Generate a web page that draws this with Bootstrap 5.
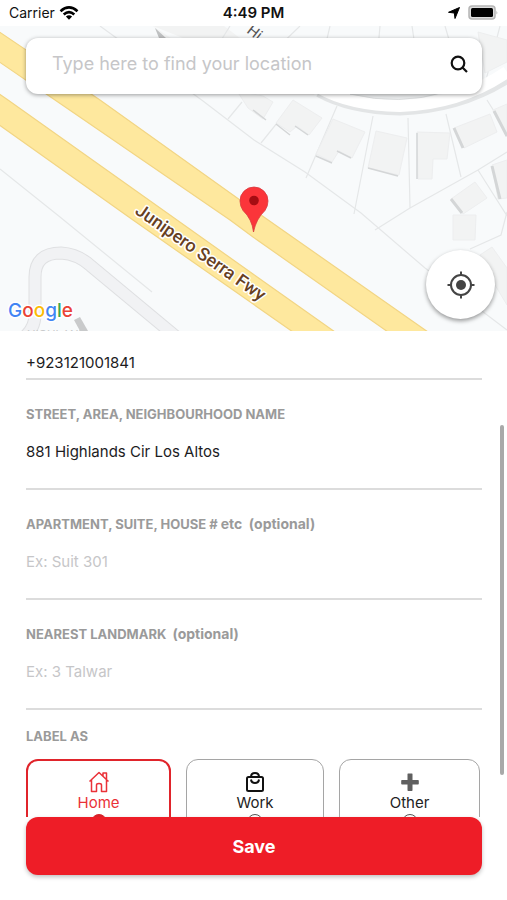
<!DOCTYPE html>
<html lang="en">
<head>
<meta charset="utf-8">
<meta name="viewport" content="width=device-width, initial-scale=1">
<title>Delivery address</title>
<link href="https://cdn.jsdelivr.net/npm/bootstrap@5.3.0/dist/css/bootstrap.min.css" rel="stylesheet">
<style>
  body { font-family: Inter, "Liberation Sans", sans-serif; font-size: 15px; color: #1c1c1e; background: #fff; }
  .status-bar { height: 26px; line-height: 26px; font-size: 14px; color: #111; padding: 0 9px; }
  .status-bar .clock { font-size: 15px; font-weight: 600; }
  .map-area { height: 305px; background: #f8fafb; }
  .map-art { inset: 0; }
  .search-box { margin: 12px 25px 0 26px; height: 56px; border-radius: 12px; background: #fff; box-shadow: 0 1px 4px rgba(0,0,0,.38); padding: 0 11px 4px 26px; }
  .search-box input { font-size: 18px; line-height: 24px; color: #333; outline: 0; }
  .search-box input::placeholder, .entry input::placeholder { color: #c6c6c8; opacity: 1; }
  .locate { right: 12px; bottom: 12px; width: 69px; height: 69px; box-shadow: 0 2px 4px rgba(0,0,0,.4); }
  .form-scroll { min-height: 0; padding: 0 25px 0 26px; }
  .entry { border-bottom: 2px solid #dcdcdc; }
  .entry input { height: 54px; font-size: 15px; color: #1c1c1e; outline: 0; margin-bottom: 10px; }
  .entry .phone { height: 30px; margin: 18px 0 0; line-height: 30px; }
  .entry label, .caption { font-size: 13px; line-height: 20px; font-weight: 700; color: #9a9a9a; white-space: pre; }
  .entry label span { font-size: 14px; }
  .entry label { height: 20px; margin-top: 24px; }
  .entry:first-child { margin-top: -1px; }
  .caption { margin: 16px 0 13px; }
  .choices { display: grid; grid-template-columns: 145fr 138fr 141fr; gap: 15px; padding-right: 2px; }
  .choice { height: 86px; border: 1px solid #a5a5a5; border-radius: 12px; padding-top: 11px; line-height: 20px; color: #222; }
  .choice.picked { border: 2px solid #e0242b; padding-top: 10px; color: #ea3138; }
  .choice input { appearance: none; width: 16px; height: 16px; border: 1px solid #555; border-radius: 50%; margin: 1px 0 0; }
  .choice input:checked { background: #d9222a; border-color: #d9222a; }
  .scroll-thumb { right: 3px; top: 94px; width: 4px; height: 350px; border-radius: 2px; background: #a9a9a9; }
  .save-wrap { padding: 0 25px 25px 26px; }
  .save-btn, .save-btn:hover { height: 58px; border: 0; border-radius: 12px; background: #ee1d27; color: #fff; font-size: 18px; font-weight: 700; box-shadow: 0 2px 4px rgba(0,0,0,.25); }
</style>
<script src="https://cdn.jsdelivr.net/npm/bootstrap@5.3.0/dist/js/bootstrap.bundle.min.js"></script>
</head>
<body>
<div class="d-flex flex-column vh-100 overflow-hidden">
  <header class="status-bar row g-0 align-items-center flex-shrink-0">
    <div class="col d-flex align-items-center gap-1">
      <span>Carrier</span>
      <svg width="20" height="14" viewBox="0 0 20 14" fill="none" stroke="#000" stroke-width="2.6" aria-label="Wi-Fi"><path d="M1.5 5.2Q10-2.4 18.500 5.200M4.700 8.500Q10 3.800 15.300 8.500"/><path d="M10 13.800 6.900 10.600Q10 8.100 13.100 10.600Z" fill="#000" stroke="none"/></svg>
    </div>
    <div class="col-auto clock">4:49 PM</div>
    <div class="col d-flex align-items-center justify-content-end gap-2">
      <svg width="12" height="12" viewBox="0 0 12 12" aria-label="Location in use"><path d="M11.500.5 7 11.500 6.300 6 .5 5.300Z" fill="#000" stroke="#000" stroke-linejoin="round"/></svg>
      <svg width="30" height="16" viewBox="0 0 30 16" aria-label="Battery full"><rect x="1" y="1" width="26" height="13" rx="3" fill="#ddd" stroke="#b5b5b5" stroke-width="1.500"/><rect x="3" y="3" width="22" height="9" rx="1.500" fill="#000"/><path d="M28.500 5.500q1.500 2 0 4z" fill="#aaa"/></svg>
    </div>
  </header>

  <section class="map-area position-relative overflow-hidden flex-shrink-0">
    <svg class="map-art position-absolute w-100 h-100" viewBox="0 26 507 305" preserveAspectRatio="xMidYMid slice" aria-label="Map">
      <rect y="26" width="507" height="305" fill="#f8fafb"/>
      <path d="M153 26 224 26 315 95 260 95 245 88 M153 26 190 60H238Z" fill="#f2f3f3"/>
      <g fill="none" stroke="#e5e7e8" stroke-width="1.200">
        <path d="M100 26 203 101 254 140 305 172 361 213 425 268 507 330M0 169 60 217 152 292"/>
        <path d="M242 102 228 119M294 102 261 143M337 106 306 178M373 116 354 214M408 118 410 208M446 114 461 177M375 230 410 208 478 170 507 152M478 170 507 216M487 100 507 132M470 249 501 235 507 212M215 50 230 26M270 55 300 26M330 26 322 60M380 26 377 60M412 26 417 60M445 26 455 60M500 26 486 80"/>
      </g>
      <path d="M320 90Q350 107 400 108Q460 106 507 76" fill="none" stroke="#e3e5e6" stroke-width="15"/>
      <path d="M320 88Q350 105 400 106Q460 104 507 72" fill="none" stroke="#fff" stroke-width="12"/>
      <path d="M350 94Q400 106 445 92Z" fill="#eceeef" stroke="#dcdedf"/>
      <g fill="#f2f3f3" stroke="#edeeef">
        <path d="M237 91 263 96 273 102 263 119 248 108ZM293 100 322 118 309 135 297 126 290 132 276 123ZM333 119 365 132 352 158 339 151 332 162 316 154ZM376 131 407 138 399 175 368 168ZM417 132 450 133 447 159 433 159 432 179 418 179ZM454 128 490 114 497 132 464 148ZM493 110 507 104V137ZM492 165 507 160V198L498 199ZM451 199 475 182 487 198 463 214ZM453 215 476 215 475 240 453 240Z"/>
        <path d="M480 255 492 247 507 268V305L492 280ZM478 32 507 40V62L485 73Z"/>
      </g>
      <g fill="none" stroke="#d4d6d7" stroke-width="1.500">
        <path d="M253 110 266 120M276 124 290 135M295 126 308 135M316 156 332 163M337 151 351 158M368 168 398 176M417 133V179"/>
        <path d="M454 128 463 148M494 111 507 136M492 166 500 199M451 199 462 213" stroke-width="3"/>
      </g>
      <path d="M155 28 166 38H159Z" fill="#bfc1c2"/>
      <path d="M20 340Q35 331 35 314V277Q35 253 61 253Q78 254 91 266L180 340" fill="none" stroke="#dfe0e2" stroke-width="13"/>
      <path d="M20 340Q35 331 35 314V277Q35 253 61 253Q78 254 91 266L180 340" fill="none" stroke="#f1f2f4" stroke-width="11"/>
      <path d="M74 320 80 317 88 331H80Z" fill="#c9cacb"/>
      <g fill="#fee89e" stroke="#f2d584" stroke-width="1.200">
        <path d="M-2 31 100 100 240 200 261 215 428 332H388L253 237 230 220 55 100-2 61Z"/>
        <path d="M-2 93 8 100 177 220 253 274 335 332H293L133 220-2 124Z"/>
      </g>
      <text x="246" y="32" transform="rotate(38 246 32)" font-family="Roboto, sans-serif" font-size="15" fill="#555">Hi</text>
      <text x="27" y="339" font-family="Roboto, sans-serif" font-size="12" fill="#c8cacb">HIGHLAND</text>
      <text x="134" y="213" transform="rotate(35 134 213)" font-family="Roboto, sans-serif" font-size="18" font-weight="500" fill="#67401f" stroke="#fff" stroke-width="3" stroke-linejoin="round" paint-order="stroke">Junipero Serra Fwy</text>
      <path d="M253.500 232Q252 219 243 210.500Q240 206 240 201A14 14 0 0 1 268 201Q268 206 265 210.500Q256 219 253.500 232Z" fill="#fb353a" stroke="#d8393d" stroke-width=".8"/>
      <circle cx="254" cy="200.500" r="4.800" fill="#a50d12"/>
      <text x="8" y="317" font-family="Inter, sans-serif" font-size="19" font-weight="500" stroke="#fff" stroke-width="3" paint-order="stroke"><tspan fill="#4285f4">G</tspan><tspan fill="#ea4335">o</tspan><tspan fill="#fbbc05">o</tspan><tspan fill="#4285f4">g</tspan><tspan fill="#34a853">l</tspan><tspan fill="#ea4335">e</tspan></text>
    </svg>
    <div class="search-box position-relative d-flex align-items-center">
      <input type="text" class="border-0 p-0 flex-grow-1 bg-transparent" placeholder="Type here to find your location" aria-label="Find your location">
      <button type="button" class="btn p-0 border-0 d-flex" aria-label="Search">
        <svg width="24" height="24" viewBox="0 0 24 24" fill="none" stroke="#111" stroke-width="2.200"><circle cx="11" cy="11" r="6.300"/><path d="M15.500 15.500 20 20"/></svg>
      </button>
    </div>
    <button type="button" class="locate btn bg-white border-0 rounded-circle position-absolute p-0 d-flex align-items-center justify-content-center" aria-label="Use current location">
      <svg width="28" height="28" viewBox="0 0 28 28" fill="none" stroke="#444" stroke-width="2"><circle cx="14" cy="14" r="10"/><path d="M14 .5V5M14 23v4.500M.5 14H5M23 14h4.500"/><circle cx="14" cy="14" r="5" fill="#444" stroke="none"/></svg>
    </button>
  </section>

  <main class="form-scroll flex-grow-1 overflow-hidden position-relative">
    <div class="entry">
      <input type="tel" class="phone d-block w-100 border-0 p-0" value="+923121001841" aria-label="Phone number">
    </div>
    <div class="entry">
      <label class="d-block" for="street">STREET, AREA, NEIGHBOURHOOD NAME</label>
      <input id="street" type="text" class="d-block w-100 border-0 p-0" value="881 Highlands Cir Los Altos">
    </div>
    <div class="entry">
      <label class="d-block" for="apartment">APARTMENT, SUITE, HOUSE # <span>etc  (optional)</span></label>
      <input id="apartment" type="text" class="d-block w-100 border-0 p-0" placeholder="Ex: Suit 301">
    </div>
    <div class="entry">
      <label class="d-block" for="landmark">NEAREST LANDMARK  <span>(optional)</span></label>
      <input id="landmark" type="text" class="d-block w-100 border-0 p-0" placeholder="Ex: 3 Talwar">
    </div>
    <div class="caption" id="label-as">LABEL AS</div>
    <div class="choices" role="radiogroup" aria-labelledby="label-as">
      <label class="choice picked d-flex flex-column align-items-center">
        <svg width="22" height="22" viewBox="0 0 22 22" fill="none" stroke="currentColor" stroke-width="1.500" stroke-linejoin="round"><path d="M1.500 10.500 11 1.500 20.500 10.500M3.500 9V20.500H8.500V14Q8.500 12.500 11 12.500T13.500 14V20.500H18.500V9M15 5V2H18.500V8"/></svg>
        <span>Home</span>
        <input type="radio" name="place" checked>
      </label>
      <label class="choice d-flex flex-column align-items-center">
        <svg width="22" height="22" viewBox="0 0 22 22" fill="none" stroke="#111" stroke-width="2" stroke-linejoin="round"><rect x="3" y="6" width="16" height="14" rx="1.500"/><path d="M7 6Q7 2 11 2T15 6M7 8.500Q7.500 12 11 12T15 8.500"/></svg>
        <span>Work</span>
        <input type="radio" name="place">
      </label>
      <label class="choice d-flex flex-column align-items-center">
        <svg width="22" height="22" viewBox="0 0 22 22"><path d="M9 2.500h4q.5 0 .5.500v6H19q.8 0 .8.800v3q0 .7-.8.700h-5.500v5.800q0 .7-.7.700H9.200q-.7 0-.7-.7V13.500H3q-.8 0-.8-.7v-3q0-.8.800-.8h5.500V3q0-.5.500-.5Z" fill="#606060"/></svg>
        <span>Other</span>
        <input type="radio" name="place">
      </label>
    </div>
    <div class="scroll-thumb position-absolute"></div>
  </main>

  <footer class="save-wrap flex-shrink-0">
    <button type="submit" class="save-btn btn w-100">Save</button>
  </footer>
</div>
</body>
</html>
